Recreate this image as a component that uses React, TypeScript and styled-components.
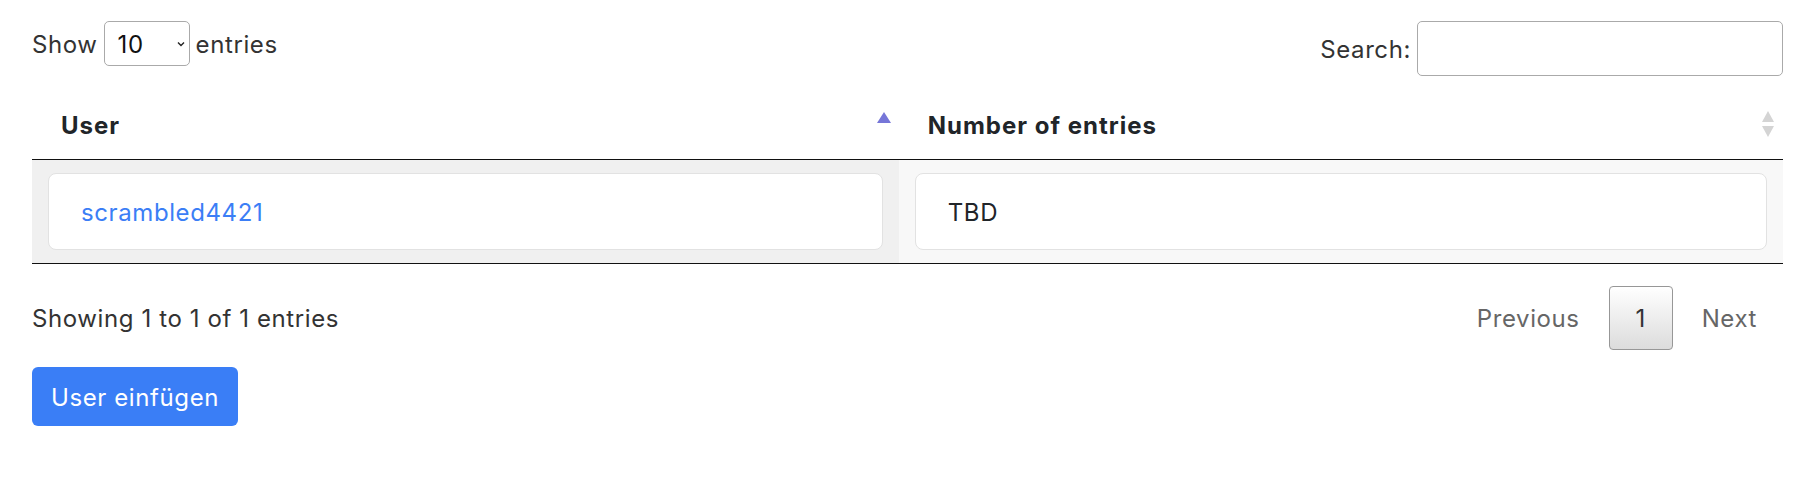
import React from "react";
import styled, { createGlobalStyle } from "styled-components";

const GlobalStyle = createGlobalStyle`
  html, body {
    margin: 0;
    padding: 0;
    background: #ffffff;
  }
  body {
    font-family: Inter, "Noto Sans", "Liberation Sans", sans-serif;
    font-size: 24px;
    line-height: 1.5;
    letter-spacing: 0.6px;
    color: #333333;
  }
  * { box-sizing: border-box; }
`;

const Page = styled.div`
  padding: 21px 21px 0 32px;
`;

const TopBar = styled.div`
  display: flex;
  justify-content: space-between;
  align-items: flex-start;
`;

const LengthLabel = styled.label`
  display: flex;
  align-items: center;
  gap: 6px;
  height: 45px;
`;

const LabelText = styled.span`
  padding-top: 3px;
`;

const SelectWrap = styled.span`
  position: relative;
  display: inline-flex;
`;

const Select = styled.select`
  appearance: none;
  -webkit-appearance: none;
  width: 86px;
  height: 45px;
  padding: 2px 0 0 13px;
  border: 1px solid #aaaaaa;
  border-radius: 5px;
  background: #ffffff;
  font-family: inherit;
  font-size: 24px;
  letter-spacing: 0.6px;
  color: #111111;
`;

const Chevron = styled.svg`
  position: absolute;
  right: 5px;
  top: 20px;
  pointer-events: none;
`;

const SearchLabel = styled.label`
  display: flex;
  align-items: center;
  gap: 6px;
  height: 55px;
`;

const SearchInput = styled.input`
  width: 366px;
  height: 55px;
  border: 1px solid #aaaaaa;
  border-radius: 5px;
  background: #ffffff;
  font-family: inherit;
  font-size: 24px;
  padding: 0 8px;
`;

const Table = styled.table`
  width: 100%;
  margin-top: 15px;
  border-collapse: collapse;
  border-spacing: 0;
`;

const HeadCell = styled.th<{ $w: string }>`
  width: ${(p) => p.$w};
  padding: 16px 7px 16px 29px;
  text-align: left;
  font-weight: 700;
  letter-spacing: 1px;
  color: #212529;
  border-bottom: 1px solid #111111;
`;

const HeadInner = styled.div`
  display: flex;
  justify-content: space-between;
  align-items: center;
  height: 36px;
`;

const HeadLabel = styled.span`
  padding-top: 2px;
`;

const BodyRow = styled.tr`
  border-bottom: 1px solid #111111;
`;

const BodyCell = styled.td<{ $sorted?: boolean }>`
  padding: 13px 16px;
  background: ${(p) => (p.$sorted ? "#f0f0f0" : "#f8f8f8")};
`;

const CellCard = styled.div`
  display: flex;
  align-items: center;
  height: 77px;
  padding: 2px 32px 0;
  background: #ffffff;
  border: 1px solid #e2e2e2;
  border-radius: 8px;
  color: #212529;
`;

const UserLink = styled.a`
  color: #3b7ef6;
  text-decoration: none;
`;

const Footer = styled.div`
  display: flex;
  justify-content: space-between;
  align-items: center;
  margin-top: 22px;
`;

const Info = styled.div`
  color: #333333;
  padding-top: 2px;
`;

const Pagination = styled.div`
  display: flex;
  align-items: center;
  gap: 4px;
  margin-right: 1px;
`;

const PageButton = styled.span<{ $current?: boolean }>`
  display: inline-flex;
  align-items: center;
  justify-content: center;
  height: 64px;
  min-width: 64px;
  padding: 2px 24px 0;
  border-radius: 4px;
  border: 1px solid ${(p) => (p.$current ? "#979797" : "transparent")};
  background: ${(p) =>
    p.$current ? "linear-gradient(to bottom, #ffffff 0%, #dcdcdc 100%)" : "transparent"};
  color: ${(p) => (p.$current ? "#333333" : "#666666")};
`;

const PrimaryButton = styled.button`
  margin-top: 17px;
  height: 59px;
  width: 206px;
  border: none;
  border-radius: 6px;
  background: #3a7ef6;
  color: #ffffff;
  font-family: inherit;
  font-size: 24px;
  letter-spacing: 0.6px;
  padding: 2px 0 0;
`;

const SortIcon: React.FC<{ active?: boolean }> = ({ active }) => (
  <svg width="16" height="28" viewBox="0 0 16 28" aria-hidden="true">
    {active ? (
      <polygon points="8,1 15,12 1,12" fill="#7676d8" />
    ) : (
      <>
        <polygon points="8,0 14,11 2,11" fill="#d4d4d4" />
        <polygon points="2,15 14,15 8,26" fill="#d4d4d4" />
      </>
    )}
  </svg>
);

export default function App() {
  return (
    <>
      <GlobalStyle />
      <Page>
        <TopBar>
          <LengthLabel>
            <LabelText>Show</LabelText>
            <SelectWrap>
              <Select defaultValue="10">
                <option value="10">10</option>
                <option value="25">25</option>
                <option value="50">50</option>
                <option value="100">100</option>
              </Select>
              <Chevron width="8" height="6" viewBox="0 0 8 6">
                <path d="M1 1.5 L4 4.5 L7 1.5" fill="none" stroke="#222" strokeWidth="1.4" />
              </Chevron>
            </SelectWrap>
            <LabelText>entries</LabelText>
          </LengthLabel>
          <SearchLabel>
            <LabelText>Search:</LabelText>
            <SearchInput type="search" />
          </SearchLabel>
        </TopBar>

        <Table>
          <thead>
            <tr>
              <HeadCell $w="49.5%">
                <HeadInner>
                  <HeadLabel>User</HeadLabel>
                  <SortIcon active />
                </HeadInner>
              </HeadCell>
              <HeadCell $w="50.5%">
                <HeadInner>
                  <HeadLabel>Number of entries</HeadLabel>
                  <SortIcon />
                </HeadInner>
              </HeadCell>
            </tr>
          </thead>
          <tbody>
            <BodyRow>
              <BodyCell $sorted>
                <CellCard>
                  <UserLink href="#">scrambled4421</UserLink>
                </CellCard>
              </BodyCell>
              <BodyCell>
                <CellCard>TBD</CellCard>
              </BodyCell>
            </BodyRow>
          </tbody>
        </Table>

        <Footer>
          <Info>Showing 1 to 1 of 1 entries</Info>
          <Pagination>
            <PageButton>Previous</PageButton>
            <PageButton $current>1</PageButton>
            <PageButton>Next</PageButton>
          </Pagination>
        </Footer>

        <PrimaryButton>User einfügen</PrimaryButton>
      </Page>
    </>
  );
}
